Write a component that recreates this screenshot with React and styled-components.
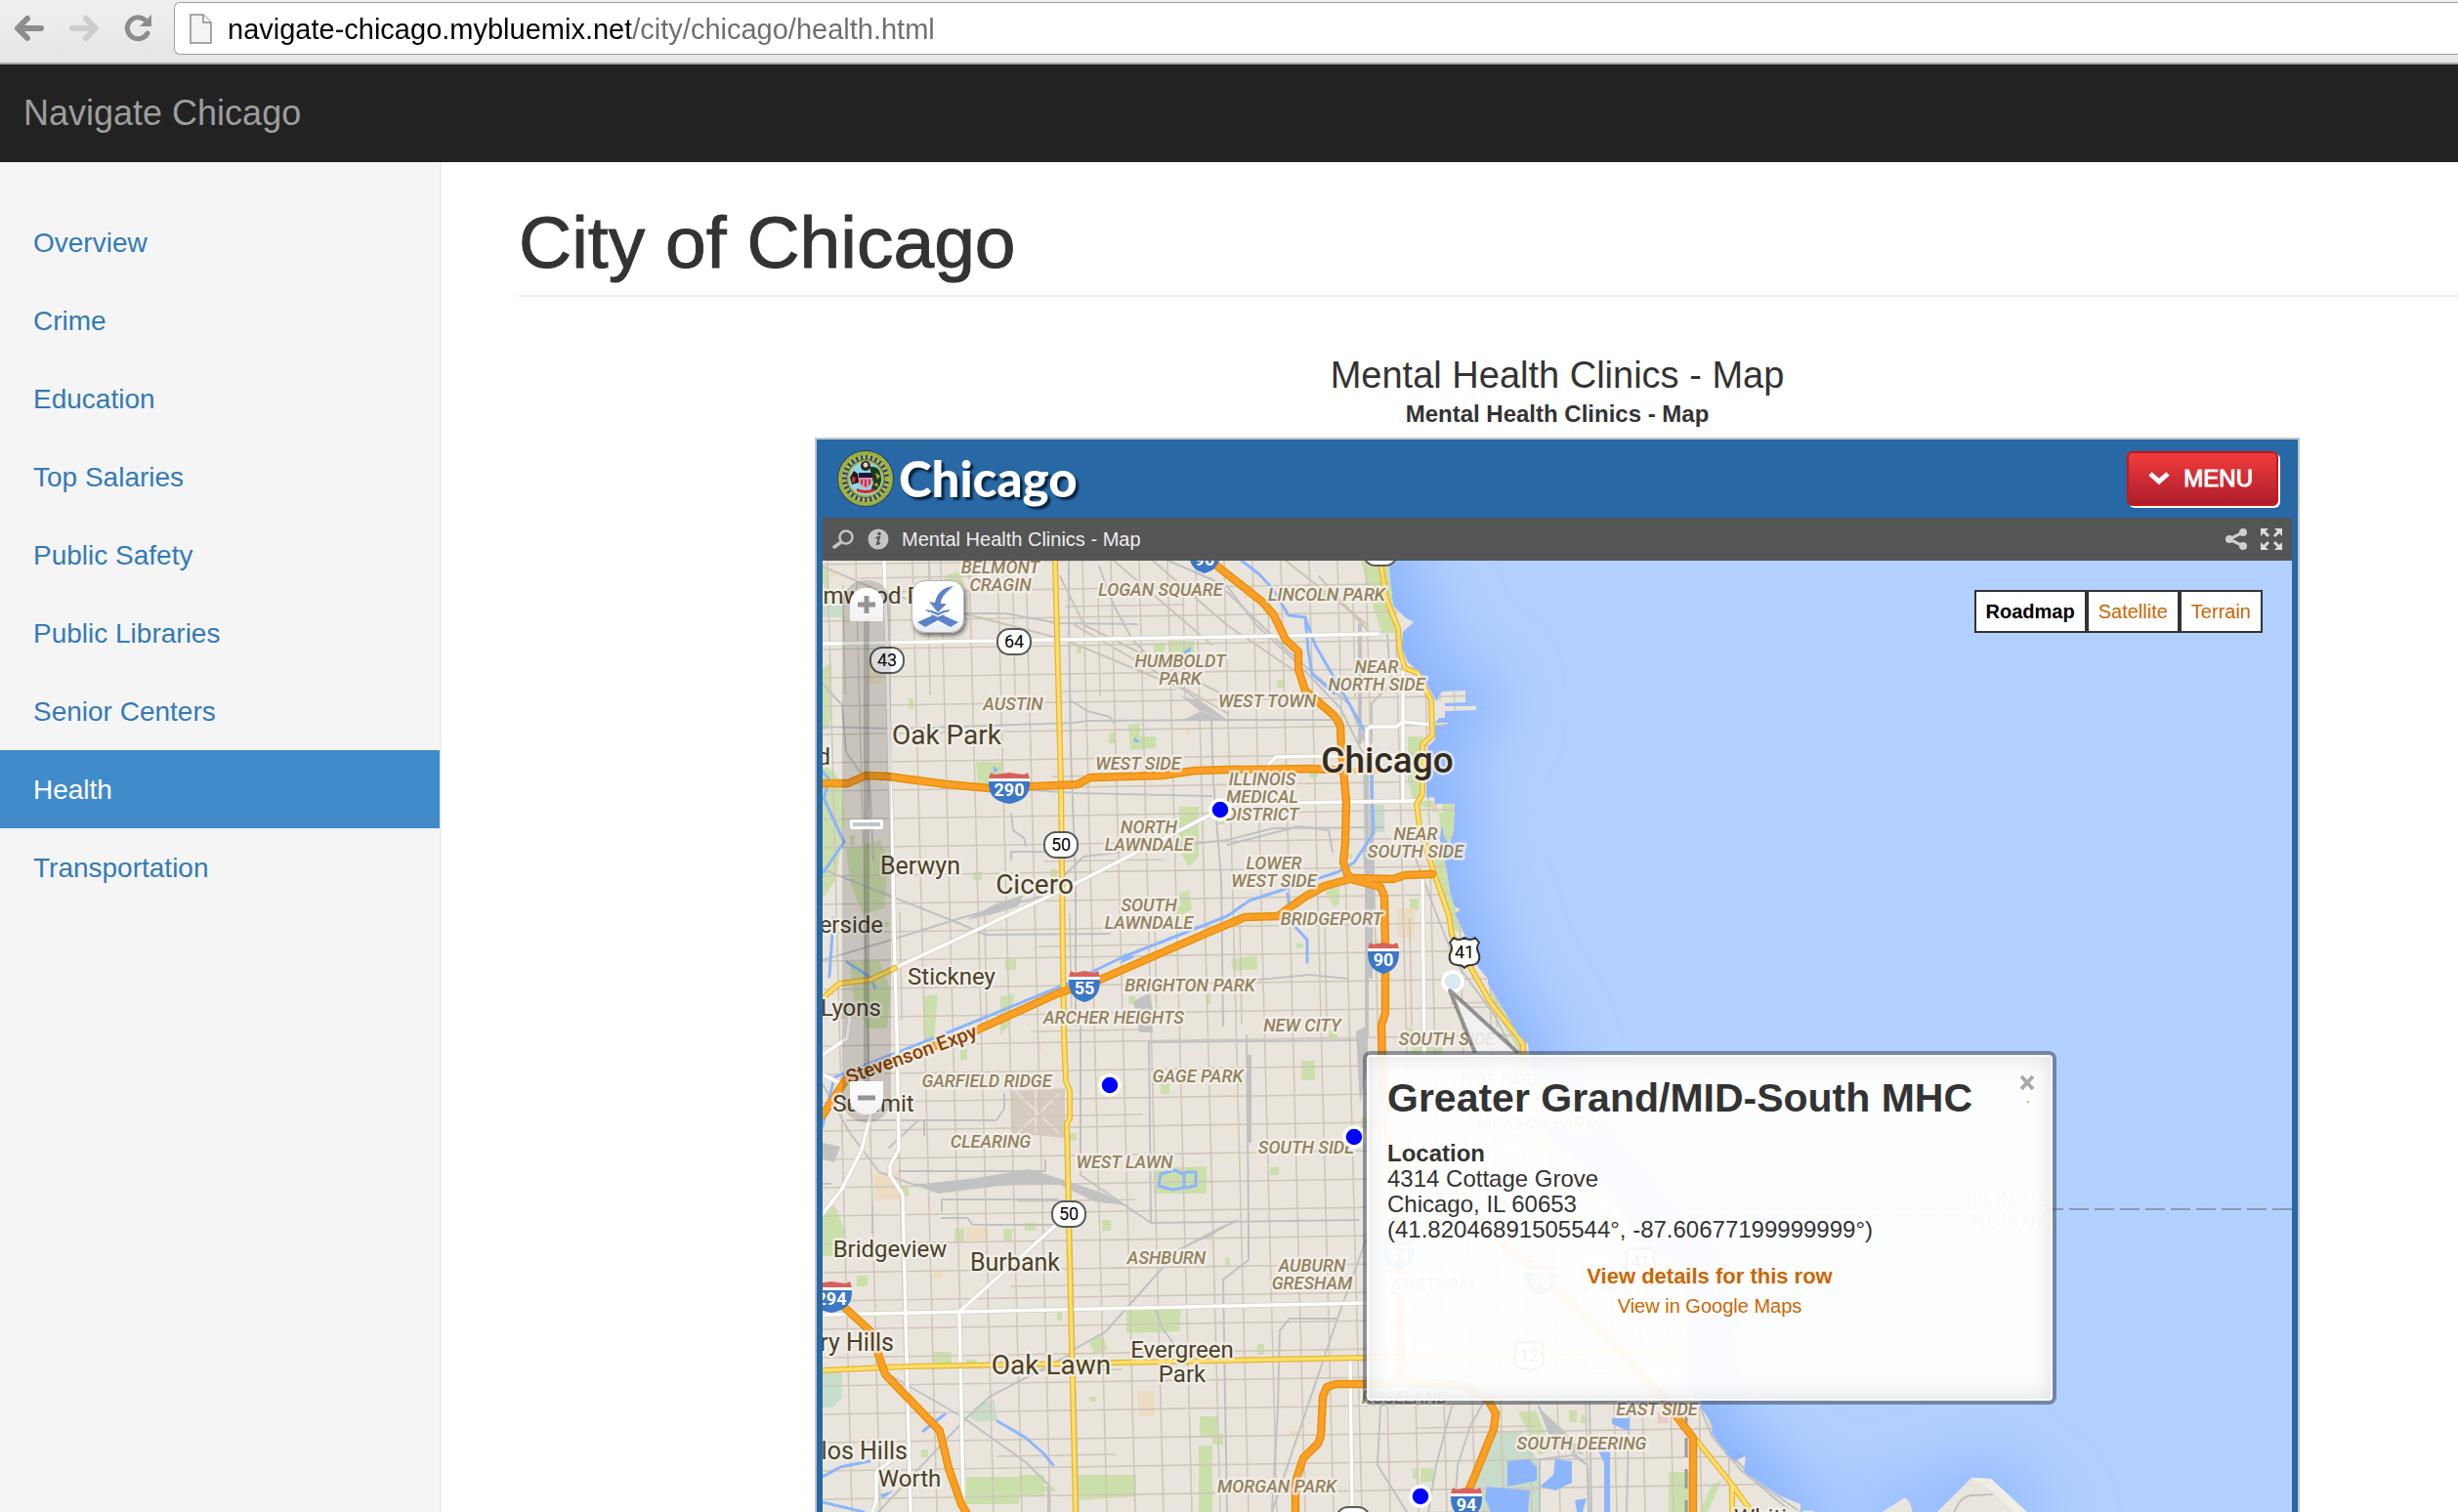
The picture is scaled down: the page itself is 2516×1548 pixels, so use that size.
import React, { useState } from "react";
import styled, { createGlobalStyle } from "styled-components";

const GlobalStyle = createGlobalStyle`
  * {
    box-sizing: border-box;
  }
  body {
    margin: 0;
    background: #fff;
    color: #333;
    font-family: "Liberation Sans", Arial, sans-serif;
    overflow-x: hidden;
  }
  button, input {
    font-family: inherit;
    margin: 0;
  }
`;

/* ---------- browser bar ---------- */

const BrowserBar = styled.div`
  display: flex;
  align-items: flex-start;
  height: 66px;
  padding: 2px 0 0 12px;
  background: linear-gradient(#f0f0f0, #e5e5e5);
  border-bottom: 2px solid #a8a8a8;
  overflow: hidden;
`;

const BarButton = styled.button`
  display: flex;
  align-items: center;
  justify-content: center;
  width: 36px;
  height: 54px;
  margin-right: 20px;
  padding: 0;
  border: 0;
  background: none;
`;

const AddressBox = styled.label`
  display: flex;
  flex: 1;
  align-items: center;
  height: 54px;
  margin-left: -2px;
  padding-left: 15px;
  gap: 16px;
  background: #fff;
  border: 1px solid #a0a0a0;
  border-right: 0;
  border-radius: 6px 0 0 6px;
`;

const Address = styled.input`
  flex: 1;
  height: 44px;
  padding: 2px 0 0;
  border: 0;
  outline: 0;
  font-size: 29px;
  color: transparent;
  background: linear-gradient(to right, #000 412px, #6e6e6e 412px);
  background-clip: text;
  -webkit-background-clip: text;
`;

/* ---------- page ---------- */

const Navbar = styled.nav`
  display: flex;
  align-items: center;
  height: 100px;
  padding: 0 24px;
  background: #222;
`;

const Brand = styled.a`
  color: #9d9d9d;
  font-size: 36px;
  line-height: 40px;
  text-decoration: none;
`;

const Body = styled.div`
  display: flex;
  align-items: stretch;
`;

const Sidebar = styled.ul`
  flex: 0 0 452px;
  margin: 0;
  padding: 42px 0 0;
  list-style: none;
  background: #f5f5f5;
  border-right: 2px solid #eee;
`;

const SideLink = styled.a`
  display: block;
  padding: 21px 34px 19px;
  font-size: 28px;
  line-height: 40px;
  text-decoration: none;
  color: ${(props) => (props.$active ? "#fff" : "#337ab7")};
  background: ${(props) => (props.$active ? "#428bca" : "none")};
`;

const Main = styled.main`
  flex: 1;
  min-width: 0;
  padding: 42px 0 0 79px;
`;

const PageHeader = styled.h1`
  margin: 0;
  padding-bottom: 14px;
  border-bottom: 2px solid #eee;
  font-size: 75px;
  line-height: 80px;
  font-weight: normal;
  -webkit-text-stroke: 1px #333;
`;

const Placeholder = styled.section`
  display: flex;
  flex-direction: column;
  align-items: center;
  padding: 60px 0 0 141px;
  text-align: center;
`;

const MapTitle = styled.h4`
  margin: 0;
  font-size: 38px;
  line-height: 40px;
  font-weight: normal;
`;

const MapSubtitle = styled.div`
  padding: 4px 0 8px;
  font-size: 24px;
  line-height: 32px;
  font-weight: bold;
`;

/* ---------- map embed ---------- */

const Embed = styled.div`
  width: 100%;
  max-width: 1520px;
  padding: 0 6px;
  text-align: left;
  background: #2768a5;
  border: 2px solid #c6c6c8;
  border-bottom: 0;
`;

const EmbedHeader = styled.header`
  display: flex;
  align-items: center;
  justify-content: space-between;
  height: 80px;
  padding: 0 14px;
`;

const Logo = styled.a`
  display: flex;
  align-items: center;
  gap: 4px;
  color: #fff;
  font-family: Lato, sans-serif;
  font-size: 51px;
  line-height: 60px;
  font-weight: 900;
  text-decoration: none;
  text-shadow: 3px 3px 2px #0b2540;
`;

const MenuButton = styled.button`
  display: flex;
  align-items: center;
  gap: 14px;
  height: 56px;
  padding: 0 24px 0 20px;
  color: #fff;
  font-size: 24px;
  font-weight: normal;
  -webkit-text-stroke: 1px #fff;
  background: linear-gradient(#f23c3c, #ad1d2b);
  border: 2px solid #cc1517;
  border-radius: 6px;
  box-shadow: 2px 2px 0 #fff;
`;

const Toolbar = styled.div`
  display: flex;
  align-items: center;
  gap: 12px;
  height: 44px;
  padding: 0 9px;
  color: #eee;
  background: #555;
`;

const ToolbarTitle = styled.h2`
  flex: 1;
  margin: 0;
  font-size: 20px;
  line-height: 24px;
  font-weight: normal;
`;

const IconButton = styled.button`
  display: flex;
  align-items: center;
  justify-content: center;
  width: 24px;
  height: 24px;
  padding: 0;
  border: 0;
  background: none;
`;

const MapPane = styled.div`
  position: relative;
  height: 974px;
  overflow: hidden;
  background: #b1d0ff;
`;

const MapDrawing = styled.svg`
  display: block;
  width: 1504px;
  height: 974px;
  font-family: Roboto, sans-serif;
`;

const ZoomColumn = styled.div`
  position: absolute;
  top: 20px;
  left: 20px;
  display: flex;
  flex-direction: column;
  align-items: center;
  width: 50px;
  padding: 8px 0;
  background: rgba(0, 0, 0, 0.14);
  border-radius: 24px;
`;

const ZoomButton = styled.button`
  display: flex;
  align-items: center;
  justify-content: center;
  width: 34px;
  height: 34px;
  padding: 0;
  border: 0;
  background: linear-gradient(#fff, #f1f1f1);
  border-radius: ${(props) => (props.$end === "top" ? "16px 16px 0 0" : "0 0 16px 16px")};
`;

const ZoomRange = styled.input`
  appearance: none;
  writing-mode: vertical-lr;
  direction: rtl;
  width: 34px;
  height: 471px;
  background: linear-gradient(to right, transparent 14px, rgba(0, 0, 0, 0.16) 14px, rgba(0, 0, 0, 0.16) 20px, transparent 20px);

  &::-webkit-slider-thumb {
    appearance: none;
    width: 34px;
    height: 10px;
    background: #c4c4c4;
    border: 3px solid #fff;
    border-radius: 2px;
  }
`;

const ResetButton = styled.button`
  position: absolute;
  top: 20px;
  left: 91px;
  display: flex;
  align-items: center;
  justify-content: center;
  width: 54px;
  height: 54px;
  padding: 0;
  background: linear-gradient(#fff 60%, #e8ebf4);
  border: 1px solid #b5b5bb;
  border-radius: 14px;
  box-shadow: 2px 3px 4px rgba(0, 0, 0, 0.5);
`;

const TypeSwitch = styled.div`
  position: absolute;
  top: 30px;
  right: 30px;
  display: flex;
`;

const TypeButton = styled.button`
  height: 44px;
  padding: 0 10px;
  font-size: 20px;
  line-height: 24px;
  font-weight: ${(props) => (props.$on ? "bold" : "normal")};
  color: ${(props) => (props.$on ? "#000" : "#cc6600")};
  background: #fff;
  border: 2px solid #333;
`;

const Bubble = styled.div`
  position: absolute;
  top: 502px;
  left: 553px;
  width: 710px;
  height: 362px;
  padding: 20px 21px;
  background: rgba(255, 255, 255, 0.95);
  background-clip: padding-box;
  border: 4px solid rgba(50, 60, 80, 0.5);
  border-radius: 8px;
  box-shadow: inset 0 0 0 2px #fff, inset 0 0 24px rgba(0, 0, 0, 0.14);
`;

const BubbleTitle = styled.h3`
  margin: 0 0 20px;
  font-size: 41px;
  line-height: 48px;
`;

const BubbleText = styled.p`
  margin: 0;
  font-size: 24px;
  line-height: 26px;
`;

const BubbleLinks = styled.div`
  display: flex;
  flex-direction: column;
  align-items: center;
  padding-top: 20px;
`;

const BubbleLink = styled.a`
  color: #cc6600;
  font-size: ${(props) => (props.$strong ? "22px" : "20px")};
  font-weight: ${(props) => (props.$strong ? "bold" : "normal")};
  line-height: 30px;
  text-decoration: none;
`;

const CloseButton = styled.button`
  position: absolute;
  top: 16px;
  right: 16px;
  display: flex;
  width: 20px;
  height: 36px;
  padding: 0;
  border: 0;
  background: none;
`;

/* ---------- map data ---------- */

const LAND =
  "M842 560 H1421 V574 L1426 620 L1438 632 L1447 637 L1436 647 L1435 663 L1441 678 L1453 688 L1466 710 L1470 718 L1476 708 L1500 707 V719 L1479 720 V723 L1511 723 V727 L1479 728 V735 H1473 L1469 740 L1483 740 L1476 743 L1469 743 L1469 757 L1462 764 L1460 790 V817 L1468 816 L1469 823 H1489 L1488 850 L1484 864 L1478 857 L1476 840 L1474 860 L1481 893 L1484 913 L1488 927 L1495 932 L1489 935 L1499 957 L1513 990 L1523 1002 L1523 1007 L1541 1037 L1554 1060 L1564 1069 L1567 1090 L1583 1162 L1644 1215 L1682 1279 L1726 1300 L1728 1414 L1740 1440 L1753 1458 L1752 1467 L1767 1487 L1775 1480 L1787 1490 L1785 1507 L1823 1532 L1843 1540 V1560 H842 Z";

const SOUTH_LAND = "M1925 1549 L1950 1533 L1955 1539 L1958 1549 Z M1982 1549 L2018 1513 L2038 1514 L2076 1549 Z";

const PARKS = [
  "M842 580 h6 v40 h-6 Z",
  "M842 780 l20 20 l2 40 l-8 60 l-14 20 Z",
  "M866 870 l35 -10 l8 20 l-4 50 l-22 6 l-12 -30 Z",
  "M842 685 l9 -8 v50 l-3 20 h-6 Z",
  "M870 985 l30 -2 l12 30 l-4 40 h-20 l-14 -30 Z",
  "M967 590 l16 -6 l5 22 l-19 2 Z",
  "M999 780 h28 v24 h-26 Z",
  "M1196 656 h26 v20 h-24 Z",
  "M1155 742 l12 -2 v14 h16 v12 l-26 2 Z",
  "M1207 826 h20 v50 l-10 12 l-10 -18 Z",
  "M1207 915 l10 -4 l3 20 l-10 6 Z",
  "M1024 1060 l0 -40 l14 -2 l-4 30 Z",
  "M946 1020 l14 -2 l-4 46 h-10 Z",
  "M1393 574 H1421 L1426 620 L1431 648 H1414 L1402 610 Z",
  "M1441 754 h16 v60 l-10 6 l-6 -20 Z",
  "M1452 820 l17 0 l-2 12 h10 l-1 -9 h13 l-1 26 l-4 14 l-8 -4 l-4 -32 l-18 -1 Z",
  "M1466 870 l12 -2 l4 26 l14 62 l-8 -4 l-10 -30 Z",
  "M1260 982 l26 -4 l2 14 l-26 2 Z",
  "M1443 920 h9 v12 h-9 Z",
  "M1355 910 l16 -2 v18 l-6 2 Z",
  "M1524 1010 l36 54 l-4 14 l-24 -40 Z",
  "M1181 1196 l54 -2 v28 h-54 Z",
  "M1332 1086 h14 v20 h-14 Z",
  "M1153 1341 h56 l-2 22 l-54 2 Z",
  "M842 1240 l12 -6 l10 24 v28 h-22 Z",
  "M989 1512 h54 v28 h-54 Z",
  "M1103 1510 h60 v22 l-60 4 Z",
  "M1228 1450 h18 v22 h-18 Z",
  "M1227 1480 h14 v68 h-14 Z",
  "M1043 1510 h26 v22 h-26 Z",
  "M1114 1372 l14 -6 l6 16 l-14 4 Z",
  "M954 1384 h20 v12 h-20 Z",
  "M1554 1446 l18 -2 l16 40 l-12 6 Z",
  "M1708 1507 h22 v41 h-22 Z",
  "M1606 1444 h8 v12 h-8 Z",
  "M1454 1503 h13 v14 h-13 Z",
  "M977 1258 h10 v14 h-10 Z",
  "M1027 1258 h9 v12 h-9 Z",
  "M1752 1520 l10 -4 l-14 32 h-8 Z",
  "M1445 1072 h32 v8 h-32 Z",
];

const WETLANDS = [
  "M842 1405 h20 v26 l-10 10 h-10 Z",
  "M991 1450 l8 -10 l18 -8 l4 22 l-20 2 Z",
  "M1531 1465 h26 l10 20 l10 14 v49 h-60 l-10 -20 Z",
  "M1407 824 h10 v28 h-10 Z",
  "M842 620 h20 v12 h-20 Z",
];

const LAKES = [
  "M1543 1496 l22 -2 l8 8 v14 l-30 6 Z",
  "M1592 1494 l17 2 v22 l-17 8 l-16 -4 l14 -12 Z",
  "M1522 1522 l44 4 l-2 22 h-38 l-6 -14 Z",
  "M1636 1485 l12 0 v63 h-6 v-50 Z",
  "M1612 1536 l12 -2 l-4 14 h-6 Z",
  "M1650 1452 h18 v12 h-4 l-14 -6 Z",
  "M1148 980 l4 -4 l10 4 l-14 6 Z",
  "M1213 666 l6 -4 v6 l-8 2 Z",
  "M1161 760 v-6 l6 6 Z",
  "M1017 784 l5 4 l-5 4 Z",
  "M901 1530 l14 -4 l-8 6 l-4 2 Z",
];

const WATERWAYS = [
  "M842 1153 L854 1103 L963 1060 L1093 1007 L1149 980 L1256 938 L1279 922 L1316 910 L1369 893 L1386 883 L1406 853 L1404 793 L1396 747 L1379 717 L1346 660 L1336 632 L1319 630 L1303 603 L1289 588 L1271 574",
  "M1336 632 L1339 665 L1343 690 L1366 710",
  "M842 790 L849 798 L843 817 L864 862 L843 893",
  "M1318 915 L1322 945 L1338 962 L1338 985",
  "M849 1000 L853 940",
  "M867 985 L890 1000 L896 1012",
  "M1021 1455 L1050 1472 L1068 1488 L1078 1500",
  "M842 1512 L860 1502 L890 1496",
  "M945 1465 L967 1448",
  "M842 1538 L884 1548",
  "M1188 1202 l14 -4 l10 4 l0 14 l-12 2 l-14 -4 Z M1214 1200 l10 0 v14 l-10 2",
];

const RAILS = [
  "M1196 574 L1256 600 L1286 640 L1329 680 L1372 725 L1396 773 L1399 927 L1400 1060",
  "M1256 606 L1320 668 L1382 722 L1403 775 L1403 900",
  "M1125 580 L1140 620 L1160 656 L1210 705 L1256 738",
  "M986 628 L1029 628 L1083 638 L1164 639",
  "M1094 574 V630 L1096 767 L1101 900 L1101 1050",
  "M951 574 L952 610",
  "M842 744 L920 746 L1100 740 L1113 738 L1256 737 L1370 737",
  "M1096 717 L1113 728 L1136 734 L1140 740",
  "M842 890 L976 943 L1009 957 L1136 956",
  "M842 983 L913 962 L983 940 L1069 917 L1109 877 L1256 860 L1303 848 L1416 847",
  "M1035 833 L1037 850 L1048 858 L1050 866 M1035 880 V872 H1100",
  "M1256 865 L1330 846 L1360 850 L1364 872",
  "M842 700 L862 722 L866 770 L880 790 L890 800 L894 880",
  "M1041 808 L1102 812 L1240 815",
  "M1240 738 L1242 800 L1250 900 L1252 1050",
  "M1420 650 L1424 700 L1404 720 V760",
  "M1442 860 L1470 935 L1490 985 L1530 1040 L1550 1078",
  "M1256 1005 L1300 1002 L1340 998 L1380 1002",
  "M1276 1060 L1278 1250 V1290 L1252 1310 L1256 1548",
  "M1106 1050 V1203 L1150 1233 L1178 1252 L1391 1249",
  "M1176 1067 L1178 1250",
  "M1176 1067 L1391 1065",
  "M1097 1383 L1132 1363 L1206 1280 L1265 1250",
  "M897 1400 L984 1450 L1050 1497 L1073 1520 V1548",
  "M899 1548 L988 1453 L1013 1430 L1095 1387",
  "M1369 1350 L1335 1450 L1302 1548",
  "M1398 1270 L1369 1350 L1320 1350 L1310 1362 L1308 1440 L1302 1548",
  "M867 1147 H1020 L1028 1135 V1120",
  "M842 1110 L870 1160 L900 1200 L936 1213 L1095 1210",
  "M964 1240 V1228 H1082 M964 1247 H990 L996 1254 H1080",
  "M920 1199 H1070 V1188",
  "M946 1147 V1162 M940 1147 L910 1175",
  "M893 1235 V1262 M842 1212 H850",
  "M1413 1440 L1410 1500 L1440 1548",
  "M1486 1440 L1470 1500 L1462 1548",
  "M1520 1433 L1505 1460 L1492 1500 L1490 1530",
  "M1575 1440 L1590 1470 L1625 1500 L1627 1548",
  "M1627 1433 L1629 1548 M1668 1433 L1665 1548",
  "M1576 1548 V1494 L1610 1490 L1625 1500 L1626 1548",
  "M1740 1440 L1752 1470 L1782 1505 L1830 1545",
  "M1744 1440 L1760 1478 L1800 1518 L1840 1546",
  "M1182 1340 L1190 1360 L1206 1382",
];

const YARDS = [
  "M936 1213 L1000 1206 L1054 1197 L1095 1210 L1130 1222 L1152 1234 L1120 1230 L1085 1213 L1040 1212 L960 1222 Z",
  "M989 942 L1018 926 L1048 916 L1042 928 L1016 936 Z",
  "M1209 738 L1230 728 L1256 738 Z",
  "M1208 712 L1228 718 L1252 736 L1226 726 Z",
  "M1213 1275 L1255 1253 L1240 1266 Z",
  "M1160 1025 l16 -8 l4 16 v24 h-14 Z",
  "M1388 1056 L1400 1050 V1090 L1392 1130 Z",
  "M1574 1440 L1600 1464 L1622 1490 L1590 1480 Z",
  "M1395 870 h12 v60 h-8 Z",
  "M842 1170 l18 4 l-6 16 l-12 -4 Z",
  "M1276 1080 h5 v90 h-4 Z",
];

const WHITE_ROADS = [
  "M905 574 L908 665 L911 795 L914 893 L916 990 L918 1057 L920 1177 L911 1193 V1203 L924 1223 L927 1350 L932 1548",
  "M842 659 L1256 652 L1411 649",
  "M916 991 L1090 910 L1249 829",
  "M1256 823 L1449 820",
  "M1298 783 L1306 775 L1436 773",
  "M1436 687 V820",
  "M1399 773 V747 L1403 744 H1429 L1436 739 L1466 742",
  "M1456 900 L1458 1078",
  "M842 1346 L984 1343 L1400 1334",
  "M1080 1255 L982 1343 L986 1537",
  "M891 1142 L882 1177 L862 1217 L842 1243",
  "M842 1080 L867 1063 L870 1040",
  "M1382 1393 L1384 1548",
  "M914 1494 L897 1507 V1537 L893 1548",
  "M842 1100 L862 1110",
];

const YELLOW_ROADS = [
  "M1080 574 L1086 805 L1089 1060 L1091 1107 L1095 1117 V1145 L1092 1150 L1094 1250 L1101 1548",
  "M842 1403 L928 1399 L1095 1396 L1398 1390 L1727 1382",
  "M1413 574 L1419 613 L1431 643 L1433 667 L1438 684 L1451 689 L1465 717 L1466 753 L1456 762 V813 L1450 823 L1453 847 L1469 897 L1483 937 L1486 957 L1509 997 L1526 1027 L1539 1043 L1553 1060 L1559 1069 V1090 L1580 1170 L1660 1270 L1690 1340",
  "M842 1022 L859 1007 L891 1003 L916 991",
  "M1737 1475 L1773 1520 L1793 1548 M1773 1520 V1548",
];

const HIGHWAYS = [
  "M1232 570 L1244 578 L1293 617 L1304 630 L1316 655 L1329 667 V685 L1336 707 L1366 733 L1372 743 L1373 767 L1378 820 L1377 863 L1375 883 L1379 895 L1386 901 L1413 908 L1417 918 L1418 967 V1037 L1414 1050 L1415 1090 L1422 1170 L1522 1260 L1569 1297 L1663 1387 L1703 1433 L1733 1472 V1548",
  "M1422 1170 L1434 1297 V1399 L1441 1414 L1498 1419 L1523 1433 L1531 1447 L1529 1463 L1503 1527 L1498 1548",
  "M1434 1405 L1428 1416 L1398 1417 H1368 L1358 1420 L1354 1430 L1352 1470 L1349 1478 L1334 1493 L1326 1517 V1548",
  "M842 802 H868 L886 794 L909 795 L969 803 L1013 807 L1083 804 L1103 803 L1116 796 L1189 794 L1223 789 L1256 788 L1343 787 L1380 789",
  "M1466 895 L1438 896 L1426 900 L1386 899 L1356 907 L1336 918 L1316 932 L1308 938 L1274 939 L1236 955 L1126 1003 L1083 1017 L999 1055 L866 1105 L842 1142",
  "M842 1318 L866 1340 L891 1363 L906 1407 L962 1465 L971 1503 L984 1540 L990 1550",
];

// [text, centre x, baseline y]
const AREAS = [
  ["BELMONT", 1024, 587], ["CRAGIN", 1024, 605], ["LOGAN SQUARE", 1188, 610],
  ["HUMBOLDT", 1208, 683], ["PARK", 1208, 701], ["AUSTIN", 1037, 727],
  ["WEST SIDE", 1165, 788], ["NORTH", 1176, 853], ["LAWNDALE", 1176, 871],
  ["SOUTH", 1176, 933], ["LAWNDALE", 1176, 951], ["BRIGHTON PARK", 1218, 1015],
  ["ARCHER HEIGHTS", 1140, 1048], ["LINCOLN PARK", 1358, 615], ["NEAR", 1409, 689],
  ["NORTH SIDE", 1409, 707], ["WEST TOWN", 1297, 724], ["ILLINOIS", 1292, 804],
  ["MEDICAL", 1292, 822], ["DISTRICT", 1292, 840], ["NEAR", 1449, 860],
  ["SOUTH SIDE", 1449, 878], ["LOWER", 1304, 890], ["WEST SIDE", 1304, 908],
  ["BRIDGEPORT", 1363, 947], ["NEW CITY", 1333, 1056], ["SOUTH SIDE", 1481, 1070],
  ["GARFIELD RIDGE", 1010, 1113], ["GAGE PARK", 1226, 1108], ["CLEARING", 1014, 1175],
  ["WEST LAWN", 1151, 1196], ["SOUTH SIDE", 1337, 1181], ["ASHBURN", 1194, 1294],
  ["AUBURN", 1343, 1302], ["GRESHAM", 1343, 1320], ["MORGAN PARK", 1307, 1528],
  ["SOUTH DEERING", 1619, 1484], ["EAST SIDE", 1696, 1449], ["ROSELAND", 1438, 1437],
  ["HYDE PARK", 1533, 1112], ["JACKSON PARK", 1570, 1156], ["GREATER GRAND", 1519, 1224],
  ["CROSSING", 1519, 1242], ["CHATHAM", 1467, 1321],
];

// [text, x, baseline y, size, anchor]
const TOWNS = [
  ["Elmwood Park", 823, 618, 24, "start"], ["Berwyn", 942, 895, 25, "middle"],
  ["Oak Park", 969, 762, 28, "middle"], ["Cicero", 1059, 915, 28, "middle"],
  ["Riverside", 904, 955, 24, "end"], ["Stickney", 974, 1008, 24, "middle"],
  ["Lyons", 871, 1040, 24, "middle"], ["Maywood", 850, 783, 24, "end"],
  ["Summit", 894, 1138, 24, "middle"], ["Bridgeview", 911, 1287, 24, "middle"],
  ["Burbank", 1039, 1301, 25, "middle"], ["Hickory Hills", 915, 1383, 25, "end"],
  ["Oak Lawn", 1076, 1407, 28, "middle"], ["Evergreen", 1210, 1390, 24, "middle"],
  ["Park", 1210, 1415, 24, "middle"], ["Palos Hills", 929, 1494, 25, "end"],
  ["Worth", 931, 1522, 24, "middle"], ["Whiting", 1775, 1562, 24, "start"],
];

const STATE_ROUTES = [
  ["64", 1038, 657], ["43", 908, 676], ["50", 1086, 865], ["50", 1094, 1243],
  ["", 1413, 566], ["", 1385, 1556],
];

const US_ROUTES = [["41", 1499, 975], ["41", 1679, 1292], ["12", 1565, 1388]];

const INTERSTATES = [
  ["290", 1033, 807], ["55", 1110, 1010], ["90", 1416, 981], ["94", 1501, 1539],
  ["294", 851, 1328], ["90", 1233, 571], ["94", 1432, 1285], ["90", 1577, 1310],
];

const CLINICS = [[1249, 829], [1136, 1111], [1386, 1164], [1454, 1532]];

// Streets run on a half mile grid, leaning slightly off the vertical.
const STEP = 29;
const streets = [];
const smallParks = [];
for (let i = 0; i < 32; i++) {
  const x = 847 + i * STEP;
  streets.push(`M${x} 574 L${x + 25} 1548`);
  if (i % 3 !== 1) {
    const top = 600 + ((i * 167) % 500);
    streets.push(`M${x + 16} ${top} L${x + 18} ${top + 110}`);
  }
}
for (let i = 0; i < 35; i++) {
  const y = 578 + i * STEP;
  streets.push(`M842 ${y} L1850 ${y - 16}`);
  if (i % 3 !== 2) {
    const left = 880 + ((i * 211) % 640);
    streets.push(`M${left} ${y + 14} L${left + 120} ${y + 12}`);
  }
}
for (let i = 0; i < 90; i++) {
  smallParks.push({
    x: 850 + ((i * 397) % 880),
    y: 585 + ((i * 251) % 950),
    w: 5 + (i % 4) * 2,
    h: 5 + (i % 3) * 3,
    fill: i % 6 === 0 ? "#f0dcb4" : i % 11 === 0 ? "#eccaca" : "#cbdfab",
  });
}

const Lines = ({ items, color, width }) => (
  <g fill="none" stroke={color} strokeWidth={width} strokeLinejoin="round" strokeLinecap="round">
    {items.map((d) => <path key={d} d={d} />)}
  </g>
);

const Shapes = ({ items, color }) => (
  <g fill={color}>
    {items.map((d) => <path key={d} d={d} />)}
  </g>
);

const Interstate = ({ label, x, y }) => {
  const w = label.length > 2 ? 21 : 16;
  return (
    <g transform={`translate(${x} ${y})`}>
      <path d={`M${-w} -10 L${-w + 2} -16 L${-w + 6} -14 L0 -16 L${w - 6} -14 L${w - 2} -16 L${w} -10 Z`} fill="#d9615c" />
      <path d={`M${-w} -10 H${w} V-7 H${-w} Z`} fill="#fff" />
      <path d={`M${-w} -7 H${w} C${w} 8 ${w - 6} 13 0 16 C${-w + 6} 13 ${-w} 8 ${-w} -7 Z`} fill="#3b78c6" />
      <text y="8" fill="#fff" fontSize="18" fontWeight="700" textAnchor="middle">{label}</text>
    </g>
  );
};

const CityMap = () => (
  <MapDrawing viewBox="842 574 1504 974" aria-label="Map of Chicago" role="img">
    <defs>
      <clipPath id="land">
        <path d={LAND} />
      </clipPath>
      <filter id="shore" x="-20%" y="-20%" width="140%" height="140%">
        <feGaussianBlur stdDeviation="32" />
      </filter>
    </defs>

    <g filter="url(#shore)">
      <path d={LAND} fill="#8ab2fd" stroke="#8ab2fd" strokeWidth="44" />
      <path d={SOUTH_LAND} fill="#8ab2fd" stroke="#8ab2fd" strokeWidth="30" />
    </g>
    <path d="M1728 1238 H2346" stroke="#8d9aae" strokeWidth="2" strokeDasharray="20 6" />
    <path d={LAND} fill="#e9e5dc" />
    <path d={SOUTH_LAND} fill="#e9e5dc" />
    <path d="M2018 1513 L2038 1514 L2076 1549 H2062 L2036 1524 Z" fill="#f1eee7" />
    <path d="M2000 1549 Q2006 1532 2018 1531 L2040 1530" fill="none" stroke="#c0c0c0" strokeWidth="2" />

    <g clipPath="url(#land)">
      {smallParks.map((p, i) => (
        <rect key={i} x={p.x} y={p.y} width={p.w} height={p.h} fill={p.fill} />
      ))}
      <Shapes items={PARKS} color="#cbdfab" />
      <Shapes items={WETLANDS} color="#c8dccb" />
      <path d="M1036 1117 L1090 1114 V1165 L1036 1160 Z" fill="#d6cbc0" />
      <path d="M1040 1118 L1084 1160 M1084 1120 L1042 1160 M1060 1116 V1160" stroke="#e6dfd6" strokeWidth="2" />
      <path d="M895 1200 h26 v28 h-26 Z M889 680 h14 v20 h-14 Z M1430 930 h18 v30 h-18 Z M989 1256 h22 v14 h-22 Z M1164 1424 h18 v26 h-16 Z" fill="#ecdcc2" />
      <Lines items={streets} color="#cfc7b9" width={1.6} />
      <Lines
        items={["M842 580 L905 607 L1090 655 L1210 705", "M1085 590 L1110 640 L1270 720", "M1100 640 L1256 730", "M1180 574 L1256 640 L1330 690", "M1140 574 L1240 660", "M1350 590 L1404 650", "M1316 574 L1400 640"]}
        color="#cbc3b6"
        width={2}
      />
      <Shapes items={YARDS} color="#c2c2c2" />
      <Lines items={RAILS} color="#c0c1c3" width={2} />
      <Lines items={["M1399 780 V1060", "M1404 790 L1403 1000", "M1392 640 V760"]} color="#c0c1c3" width={4} />
      <Shapes items={LAKES} color="#8db5fc" />
      <Lines items={WATERWAYS} color="#8db5fc" width={3} />
      <path d="M1726 1440 V1548" stroke="#9a9a9a" strokeWidth="3" strokeDasharray="20 12" />
      <Lines items={WHITE_ROADS} color="#d6d0c5" width={5} />
      <Lines items={WHITE_ROADS} color="#fff" width={3.4} />
      <Lines items={YELLOW_ROADS} color="#e5b53c" width={6} />
      <Lines items={YELLOW_ROADS} color="#ffdf66" width={3.4} />
      <Lines items={["M1380 789 H1412"]} color="#fdc680" width={6} />
      <Lines items={HIGHWAYS} color="#e6900c" width={8.4} />
      <Lines items={HIGHWAYS} color="#fb9f27" width={5.6} />
    </g>
    <path d="M1766 1488 L1775 1480 L1787 1490 L1776 1496 Z" fill="#8db5fc" />

    <g stroke="#f4f1eb" strokeOpacity="0.8" strokeWidth="5" strokeLinejoin="round" paintOrder="stroke">
      <g fill="#938260" fontSize="18" fontStyle="italic" fontWeight="500" textAnchor="middle">
        {AREAS.map(([text, x, y]) => <text key={`${text}${x}${y}`} x={x} y={y}>{text}</text>)}
      </g>
      <g fill="#4a4128">
        {TOWNS.map(([text, x, y, size, anchor]) => (
          <text key={text + y} x={x} y={y} fontSize={size} textAnchor={anchor}>{text}</text>
        ))}
      </g>
      <text x="1420" y="791" fill="#332c1e" fontSize="37" fontWeight="500" textAnchor="middle">Chicago</text>
      <text transform="translate(869 1110) rotate(-20)" fill="#84420d" fontSize="20" fontWeight="500">Stevenson Expy</text>
      <g fill="#9a9a9a" fontSize="22" textAnchor="middle">
        <text x="2055" y="1236">ILLINOIS</text>
        <text x="2055" y="1258">INDIANA</text>
      </g>
    </g>

    {STATE_ROUTES.map(([label, x, y]) => (
      <g key={x} transform={`translate(${x} ${y})`}>
        <rect x="-17" y="-13" width="34" height="26" rx="12" fill="#fff" stroke="#5a5a5a" strokeWidth="2" />
        <text y="6" fill="#000" fontSize="18" textAnchor="middle">{label}</text>
      </g>
    ))}
    {US_ROUTES.map(([label, x, y]) => (
      <g key={x} transform={`translate(${x} ${y})`}>
        <path d="M-11 -15 Q-6 -11 0 -15 Q6 -11 11 -15 L15 -10 Q11 -5 15 2 Q17 12 7 13 Q2 13 0 16 Q-2 13 -7 13 Q-17 12 -15 2 Q-11 -5 -15 -10 Z" fill="#fff" stroke="#333" strokeWidth="2" strokeLinejoin="round" />
        <text y="6" fill="#000" fontSize="18" textAnchor="middle">{label}</text>
      </g>
    ))}
    {INTERSTATES.map(([label, x, y]) => <Interstate key={x} label={label} x={x} y={y} />)}

    {CLINICS.map(([x, y]) => (
      <circle key={x} cx={x} cy={y} r="10" fill="#0000fe" stroke="#fff" strokeWidth="3.5" />
    ))}
    <circle cx="1487" cy="1005" r="10" fill="#dce9ef" stroke="#fff" strokeWidth="3.5" />
    <path d="M1510 1078 L1484 1014 L1554 1078" fill="#f2f2f2" fillOpacity="0.88" stroke="#55585a" strokeOpacity="0.6" strokeWidth="4" strokeLinejoin="round" />
  </MapDrawing>
);

const Seal = () => (
  <svg width="60" height="60" viewBox="-30 -30 60 60" aria-hidden="true">
    <circle r="29" fill="#1d4468" />
    <circle r="26" fill="#1f3a83" stroke="#9fae3c" strokeWidth="4" />
    <circle r="22" fill="none" stroke="#aab54a" strokeWidth="5" strokeDasharray="3 2" />
    <circle r="18" fill="#8fd6e8" stroke="#a5b243" strokeWidth="2" />
    <path d="M4 -12 Q16 -14 16 2 Q14 14 5 13 L8 4 Z" fill="#173f1d" />
    <path d="M10 -6 l5 3 l-3 4 Z M8 6 l4 -2 l1 5 Z" fill="#c7a22a" />
    <path d="M-12 -8 l4 3 l1 9 l-7 2 l-2 -7 Z" fill="#2b1512" />
    <path d="M-14 -2 l4 1 l-1 5 l-3 0 Z" fill="#b8392f" />
    <circle cy="-13" r="5" fill="#34201c" />
    <circle cy="-14" r="2.5" fill="#d8d4d0" />
    <path d="M-7 -5 H7 V2 Q6 8 0 10 Q-6 8 -7 2 Z" fill="#e08aa5" />
    <path d="M-7 -6 H7 V-1 H-7 Z" fill="#1a1740" />
    <path d="M-4 1 v5 M0 1 v7 M4 1 v5" stroke="#a5213b" strokeWidth="1.5" />
    <path d="M-9 10 Q0 14 9 10 L9 13 Q0 17 -9 13 Z" fill="#e0251c" />
  </svg>
);

const LINKS = [
  "Overview",
  "Crime",
  "Education",
  "Top Salaries",
  "Public Safety",
  "Public Libraries",
  "Senior Centers",
  "Health",
  "Transportation",
];

const MAP_TYPES = ["Roadmap", "Satellite", "Terrain"];

const BrowserChrome = () => (
  <BrowserBar>
    <BarButton aria-label="Back">
      <svg width="34" height="30" viewBox="0 0 34 30" fill="none" stroke="#8d8d8d" strokeWidth="6" strokeLinecap="round" strokeLinejoin="round">
        <path d="M29 15 H7 M15 5 L5 15 L15 25" />
      </svg>
    </BarButton>
    <BarButton aria-label="Forward">
      <svg width="34" height="30" viewBox="0 0 34 30" fill="none" stroke="#cdcdcd" strokeWidth="6" strokeLinecap="round" strokeLinejoin="round">
        <path d="M5 15 H27 M19 5 L29 15 L19 25" />
      </svg>
    </BarButton>
    <BarButton aria-label="Reload">
      <svg width="30" height="30" viewBox="0 0 30 30">
        <path d="M24 20 A11 11 0 1 1 21 6" fill="none" stroke="#8d8d8d" strokeWidth="5" strokeLinecap="round" />
        <path d="M28 1 V13 H16 Z" fill="#8d8d8d" />
      </svg>
    </BarButton>
    <AddressBox>
      <svg width="23" height="31" viewBox="0 0 23 31" aria-hidden="true">
        <path d="M1 1 H14 L22 9 V30 H1 Z" fill="#f4f4f4" stroke="#8b8b8b" strokeWidth="1.5" />
        <path d="M14 1 V9 H22" fill="#fff" stroke="#8b8b8b" strokeWidth="1.5" />
      </svg>
      <Address aria-label="Address" defaultValue="navigate-chicago.mybluemix.net/city/chicago/health.html" spellCheck="false" />
    </AddressBox>
  </BrowserBar>
);

const MapControls = ({ type, setType }) => (
  <>
    <ZoomColumn>
      <ZoomButton $end="top" aria-label="Zoom in">
        <svg width="18" height="18" viewBox="0 0 18 18"><path d="M9 0 V18 M0 9 H18" stroke="#949494" strokeWidth="5" /></svg>
      </ZoomButton>
      <ZoomRange type="range" min="0" max="100" defaultValue="56" aria-label="Zoom" />
      <ZoomButton $end="bottom" aria-label="Zoom out">
        <svg width="18" height="18" viewBox="0 0 18 18"><path d="M0 9 H18" stroke="#949494" strokeWidth="5" /></svg>
      </ZoomButton>
    </ZoomColumn>
    <ResetButton aria-label="Reset view">
      <svg width="44" height="44" viewBox="0 0 44 44" fill="#5d82cc">
        <path d="M38 1 Q24 12 25 19 L31 19 L22 28 L13 17 L19 18 Q22 3 38 1 Z" />
        <path d="M9 25 L16 26 L43 38 L35 43 L22 36 Z" />
        <path d="M35 25 L28 26 L1 38 L9 43 L22 36 Z" />
        <path d="M13 28 L22 32 L31 28" fill="none" stroke="#fff" strokeWidth="1.5" />
      </svg>
    </ResetButton>
    <TypeSwitch>
      {MAP_TYPES.map((name) => (
        <TypeButton key={name} $on={name === type} onClick={() => setType(name)}>{name}</TypeButton>
      ))}
    </TypeSwitch>
  </>
);

const ClinicBubble = ({ onClose }) => (
  <Bubble>
    <CloseButton aria-label="Close" onClick={onClose}>
      <svg width="20" height="36" viewBox="0 0 20 36">
        <path d="M4 6 L16 19 M16 6 L4 19" stroke="#a9a9a9" strokeWidth="4" />
        <circle cx="11" cy="32" r="1.2" fill="#e3b87f" />
      </svg>
    </CloseButton>
    <BubbleTitle>Greater Grand/MID-South MHC</BubbleTitle>
    <BubbleText><b>Location</b></BubbleText>
    <BubbleText>4314 Cottage Grove</BubbleText>
    <BubbleText>Chicago, IL 60653</BubbleText>
    <BubbleText>(41.82046891505544°, -87.60677199999999°)</BubbleText>
    <BubbleLinks>
      <BubbleLink $strong href="#row">View details for this row</BubbleLink>
      <BubbleLink href="#maps">View in Google Maps</BubbleLink>
    </BubbleLinks>
  </Bubble>
);

const MapEmbed = () => {
  const [type, setType] = useState("Roadmap");
  const [open, setOpen] = useState(true);

  return (
    <Embed>
      <EmbedHeader>
        <Logo href="#chicago">
          <Seal />
          Chicago
        </Logo>
        <MenuButton>
          <svg width="22" height="16" viewBox="0 0 22 16" fill="none" stroke="#fff" strokeWidth="5"><path d="M2 3 L11 11 L20 3" /></svg>
          MENU
        </MenuButton>
      </EmbedHeader>
      <Toolbar>
        <IconButton aria-label="Search">
          <svg width="22" height="20" viewBox="0 0 22 20" fill="none" stroke="#c4c4c4">
            <circle cx="14" cy="8" r="6.5" strokeWidth="2.5" />
            <path d="M9 13 L2 18" strokeWidth="3.5" strokeLinecap="round" />
          </svg>
        </IconButton>
        <IconButton aria-label="About">
          <svg width="22" height="22" viewBox="0 0 22 22">
            <circle cx="11" cy="11" r="10.5" fill="#c4c4c4" />
            <circle cx="12" cy="5.5" r="1.8" fill="#555" />
            <path d="M8.5 10 L12 9 L10 16 L13 15" fill="none" stroke="#555" strokeWidth="2" />
          </svg>
        </IconButton>
        <ToolbarTitle>Mental Health Clinics - Map</ToolbarTitle>
        <IconButton aria-label="Share">
          <svg width="22" height="22" viewBox="0 0 22 22" fill="#d0d0d0" stroke="#d0d0d0" strokeWidth="3">
            <path d="M18 4 L4 11 L18 18" fill="none" />
            <circle cx="18" cy="4" r="2.5" />
            <circle cx="4" cy="11" r="2.5" />
            <circle cx="18" cy="18" r="2.5" />
          </svg>
        </IconButton>
        <IconButton aria-label="Full screen">
          <svg width="22" height="22" viewBox="0 0 22 22" fill="#dcdcdc" stroke="#dcdcdc" strokeWidth="3">
            <path d="M0 0 H8 L0 8 Z M22 0 H14 L22 8 Z M0 22 V14 L8 22 Z M22 22 V14 L14 22 Z" stroke="none" />
            <path d="M3 3 L8 8 M19 3 L14 8 M3 19 L8 14 M19 19 L14 14" />
          </svg>
        </IconButton>
      </Toolbar>
      <MapPane>
        <CityMap />
        <MapControls type={type} setType={setType} />
        {open && <ClinicBubble onClose={() => setOpen(false)} />}
      </MapPane>
    </Embed>
  );
};

const App = () => (
  <>
    <GlobalStyle />
    <BrowserChrome />
    <Navbar>
      <Brand href="#home">Navigate Chicago</Brand>
    </Navbar>
    <Body>
      <Sidebar>
        {LINKS.map((name) => (
          <li key={name}>
            <SideLink href={`#${name}`} $active={name === "Health"}>{name}</SideLink>
          </li>
        ))}
      </Sidebar>
      <Main>
        <PageHeader>City of Chicago</PageHeader>
        <Placeholder>
          <MapTitle>Mental Health Clinics - Map</MapTitle>
          <MapSubtitle>Mental Health Clinics - Map</MapSubtitle>
          <MapEmbed />
        </Placeholder>
      </Main>
    </Body>
  </>
);

export default App;
